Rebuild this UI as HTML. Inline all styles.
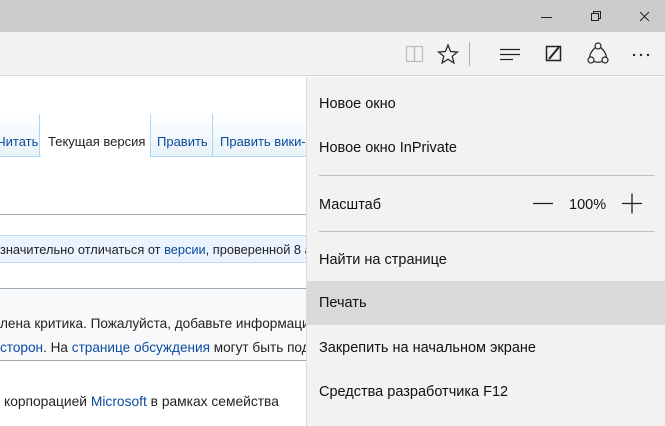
<!DOCTYPE html>
<html><head><meta charset="utf-8"><style>
*{margin:0;padding:0;box-sizing:border-box}
body{width:665px;height:426px;overflow:hidden;position:relative;background:#fff;font-family:"Liberation Sans","DejaVu Sans",sans-serif}
.abs{position:absolute}
#title{left:0;top:0;width:665px;height:32px;background:#cccccc}
#tool{left:0;top:32px;width:665px;height:44px;background:#f2f2f2;border-bottom:1px solid #d9d9d9}
.pg{font-size:13px;color:#222;white-space:nowrap}
.lk{color:#0b4a9e}
#menu{left:306px;top:77px;width:359px;height:349px;background:#f2f2f2;border-left:1px solid #dcdcdc}
.mi{position:absolute;left:12px;font-size:14.5px;color:#111;white-space:nowrap}
.sep{position:absolute;left:12px;width:336px;height:1px;background:#bfbfbf}
</style></head><body>
<div id="title" class="abs">
<svg class="abs" style="left:0;top:0" width="665" height="32">
<line x1="541" y1="17.5" x2="552" y2="17.5" stroke="#222" stroke-width="1"/>
<rect x="591.5" y="13.5" width="7" height="7" fill="none" stroke="#222"/>
<polyline points="593.5,13.5 593.5,11.5 600.5,11.5 600.5,18.5 598.5,18.5" fill="none" stroke="#222"/>
<line x1="640" y1="12" x2="649" y2="21" stroke="#222"/><line x1="649" y1="12" x2="640" y2="21" stroke="#222"/>
</svg></div>
<div id="tool" class="abs">
<svg class="abs" style="left:0;top:0" width="665" height="44">
<g fill="none" stroke="#bbb" stroke-width="1.2"><rect x="406.5" y="14.5" width="8" height="15"/><rect x="414.5" y="14.5" width="8" height="15"/></g>
<polygon points="448,13 450.6,19.5 457.5,20 452.2,24.3 454,31 448,27.2 442,31 443.8,24.3 438.5,20 445.4,19.5" fill="none" stroke="#222" stroke-width="1.2"/>
<line x1="469.5" y1="10" x2="469.5" y2="34" stroke="#aaa"/>
<g stroke="#222" stroke-width="1.2"><line x1="500" y1="17.5" x2="520" y2="17.5"/><line x1="500" y1="22.5" x2="520" y2="22.5"/><line x1="500" y1="27.5" x2="513" y2="27.5"/></g>
<rect x="546.5" y="14.5" width="14" height="14" fill="none" stroke="#222" stroke-width="1.5"/>
<line x1="549" y1="27" x2="559" y2="15" stroke="#222" stroke-width="2"/>
<g fill="none" stroke="#222" stroke-width="1.2"><circle cx="598" cy="14" r="3"/><circle cx="591" cy="28" r="3"/><circle cx="605" cy="28" r="3"/><path d="M595.5,15.5 Q590,20 589.5,25.5 M600.5,15.5 Q606,20 606.5,25.5 M594,29.5 Q598,31 602,29.5"/></g>
<g fill="#222"><circle cx="634" cy="23" r="1.2"/><circle cx="641" cy="23" r="1.2"/><circle cx="648" cy="23" r="1.2"/></g>
</svg></div>

<div class="abs" style="left:0;top:114px;width:306px;height:43px;border-bottom:1px solid #a7d7f9">
<div class="abs" style="left:0;top:0;width:40px;height:42px;background:linear-gradient(#fff,#e8f2f8);border-right:1px solid #a7d7f9"></div>
<div class="abs" style="left:150px;top:0;width:62px;height:42px;background:linear-gradient(#fff,#e8f2f8);border-left:1px solid #a7d7f9"></div>
<div class="abs" style="left:212px;top:0;width:94px;height:42px;background:linear-gradient(#fff,#e8f2f8);border-left:1px solid #a7d7f9"></div>
<div class="abs" style="left:41px;top:0;width:109px;height:43px;background:#fff"></div>
</div>
<div class="abs pg lk" style="left:-3px;top:134px">Читать</div>
<div class="abs pg" style="left:48px;top:134px">Текущая версия</div>
<div class="abs pg lk" style="left:157px;top:134px">Править</div>
<div class="abs pg lk" style="left:220px;top:134px">Править вики-текст</div>
<div class="abs" style="left:0;top:214px;width:306px;height:1px;background:#a2a9b1"></div>
<div class="abs" style="left:0;top:235px;width:306px;height:28px;background:#eaf3ff;border-top:1px solid #c0d8ee;border-bottom:1px solid #c0d8ee"></div>
<div class="abs pg" style="left:0;top:242px;font-size:12.8px">значительно отличаться от <span class="lk">версии</span>, проверенной 8 августа</div>
<div class="abs" style="left:0;top:288px;width:306px;height:73px;background:#f8f9fa;border-top:1px solid #a2a9b1;border-bottom:1px solid #a2a9b1"></div>
<div class="abs pg" style="left:0;top:316px;font-size:13.6px">лена критика. Пожалуйста, добавьте информацию</div>
<div class="abs pg" style="left:0;top:340px;font-size:13.6px"><span class="lk">сторон</span>. На <span class="lk">странице обсуждения</span> могут быть подробности</div>
<div class="abs pg" style="left:4px;top:394px;font-size:13.8px">корпорацией <span class="lk">Microsoft</span> в рамках семейства</div>

<div id="menu" class="abs">
<div class="mi" style="top:19px">Новое окно</div>
<div class="mi" style="top:63px">Новое окно InPrivate</div>
<div class="sep" style="top:98px"></div>
<div class="mi" style="top:120px">Масштаб</div>
<svg class="abs" style="left:220px;top:115px" width="120" height="24"><line x1="6" y1="11.5" x2="26" y2="11.5" stroke="#222" stroke-width="1.3"/><line x1="95" y1="11.5" x2="115" y2="11.5" stroke="#222" stroke-width="1.3"/><line x1="105" y1="1.5" x2="105" y2="21.5" stroke="#222" stroke-width="1.3"/></svg>
<div class="mi" style="top:120px;left:262px">100%</div>
<div class="sep" style="top:154px"></div>
<div class="mi" style="top:175px">Найти на странице</div>
<div class="abs" style="left:0;top:204px;width:359px;height:44px;background:#d9d9d9"></div>
<div class="mi" style="top:218px">Печать</div>
<div class="mi" style="top:263px">Закрепить на начальном экране</div>
<div class="mi" style="top:307px">Средства разработчика F12</div>
</div>
</body></html>
